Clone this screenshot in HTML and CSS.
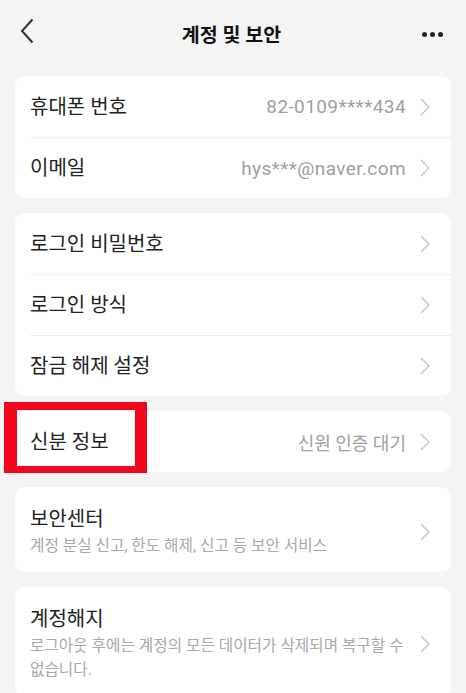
FILE: index.html
```html
<!DOCTYPE html>
<html lang="ko">
<head>
    <meta charset="UTF-8">
    <meta name="viewport" content="width=device-width, initial-scale=1.0">
    <title>계정 및 보안</title>
    <link rel="stylesheet" href="styles.css">
</head>
<body>
    <header class="topbar">
        <a href="#" class="back">
            <svg width="14" height="26" viewBox="0 0 14 26"><polyline points="12.5,1.5 2,13 12.5,24.5" fill="none" stroke="#333" stroke-width="2"/></svg>
        </a>
        <h1 class="title">계정 및 보안</h1>
        <div class="more">
            <span></span><span></span><span></span>
        </div>
    </header>

    <main class="content">
        <section class="card">
            <a href="#" class="row">
                <span class="label">휴대폰 번호</span>
                <span class="value">82-0109****434</span>
                <svg class="arrow" width="10" height="18" viewBox="0 0 10 18"><polyline points="1,1 9,9 1,17" fill="none" stroke="#c4c4c4" stroke-width="1.4"/></svg>
            </a>
            <a href="#" class="row">
                <span class="label">이메일</span>
                <span class="value">hys***@naver.com</span>
                <svg class="arrow" width="10" height="18" viewBox="0 0 10 18"><polyline points="1,1 9,9 1,17" fill="none" stroke="#c4c4c4" stroke-width="1.4"/></svg>
            </a>
        </section>

        <section class="card">
            <a href="#" class="row">
                <span class="label">로그인 비밀번호</span>
                <svg class="arrow" width="10" height="18" viewBox="0 0 10 18"><polyline points="1,1 9,9 1,17" fill="none" stroke="#c4c4c4" stroke-width="1.4"/></svg>
            </a>
            <a href="#" class="row">
                <span class="label">로그인 방식</span>
                <svg class="arrow" width="10" height="18" viewBox="0 0 10 18"><polyline points="1,1 9,9 1,17" fill="none" stroke="#c4c4c4" stroke-width="1.4"/></svg>
            </a>
            <a href="#" class="row">
                <span class="label">잠금 해제 설정</span>
                <svg class="arrow" width="10" height="18" viewBox="0 0 10 18"><polyline points="1,1 9,9 1,17" fill="none" stroke="#c4c4c4" stroke-width="1.4"/></svg>
            </a>
        </section>

        <section class="card">
            <a href="#" class="row">
                <span class="label">신분 정보</span>
                <span class="value status">신원 인증 대기</span>
                <svg class="arrow" width="10" height="18" viewBox="0 0 10 18"><polyline points="1,1 9,9 1,17" fill="none" stroke="#c4c4c4" stroke-width="1.4"/></svg>
                <div class="highlight"></div>
            </a>
        </section>

        <section class="card">
            <a href="#" class="row tall">
                <div class="text">
                    <span class="label">보안센터</span>
                    <p class="desc">계정 분실 신고, 한도 해제, 신고 등 보안 서비스</p>
                </div>
                <svg class="arrow" width="10" height="18" viewBox="0 0 10 18"><polyline points="1,1 9,9 1,17" fill="none" stroke="#c4c4c4" stroke-width="1.4"/></svg>
            </a>
        </section>

        <section class="card">
            <a href="#" class="row tall">
                <div class="text">
                    <span class="label">계정해지</span>
                    <p class="desc">로그아웃 후에는 계정의 모든 데이터가 삭제되며 복구할 수 없습니다.</p>
                </div>
                <svg class="arrow" width="10" height="18" viewBox="0 0 10 18"><polyline points="1,1 9,9 1,17" fill="none" stroke="#c4c4c4" stroke-width="1.4"/></svg>
            </a>
        </section>
    </main>
</body>
</html>
```

FILE: styles.css
```css
* {
    margin: 0;
    padding: 0;
    box-sizing: border-box;
    font-family: Roboto, "Noto Sans CJK KR", sans-serif;
}

body {
    background-color: #f4f4f4;
    color: #222222;
    height: 693px;
    overflow: hidden;
}

.topbar {
    height: 61px;
    display: flex;
    align-items: center;
    justify-content: space-between;
    padding: 0 23px 0 20px;
}

.back {
    display: flex;
    width: 40px;
}

.title {
    font-size: 19.5px;
    font-weight: bold;
    color: #111111;
    padding-top: 6px;
}

.more {
    width: 40px;
    display: flex;
    justify-content: flex-end;
    gap: 2.5px;
    padding-top: 8px;
}

.more span {
    width: 5.5px;
    height: 5.5px;
    border-radius: 50%;
    background-color: #222222;
}

.content {
    padding: 15px 15px 0;
    display: flex;
    flex-direction: column;
    gap: 15px;
}

.card {
    background-color: white;
    border-radius: 10px;
}

.row {
    position: relative;
    display: flex;
    align-items: center;
    height: 61px;
    margin-left: 15px;
    padding-right: 21px;
    text-decoration: none;
    color: #222222;
}

.row + .row {
    border-top: 1px solid #ededed;
}

.label {
    font-size: 20px;
    line-height: 28px;
}

.value {
    margin-left: auto;
    font-size: 19px;
    letter-spacing: 0.4px;
    color: #a0a0a0;
}

.value.status {
    font-size: 18px;
    letter-spacing: 0;
}

.arrow {
    margin-left: 14px;
    flex-shrink: 0;
}

.row .label + .arrow {
    margin-left: auto;
}

.tall {
    height: auto;
    padding-top: 18px;
    padding-bottom: 14px;
}

.tall .text {
    flex: 1;
    display: flex;
    flex-direction: column;
}

.tall .arrow {
    margin-left: 10px;
}

.desc {
    margin-top: 1px;
    font-size: 15.7px;
    line-height: 24px;
    color: #a8a8a8;
}

.highlight {
    position: absolute;
    left: -26px;
    top: -9px;
    width: 143px;
    height: 71px;
    border-style: solid;
    border-color: #f2061c;
    border-width: 8px 12px 7px 13px;
}
```
